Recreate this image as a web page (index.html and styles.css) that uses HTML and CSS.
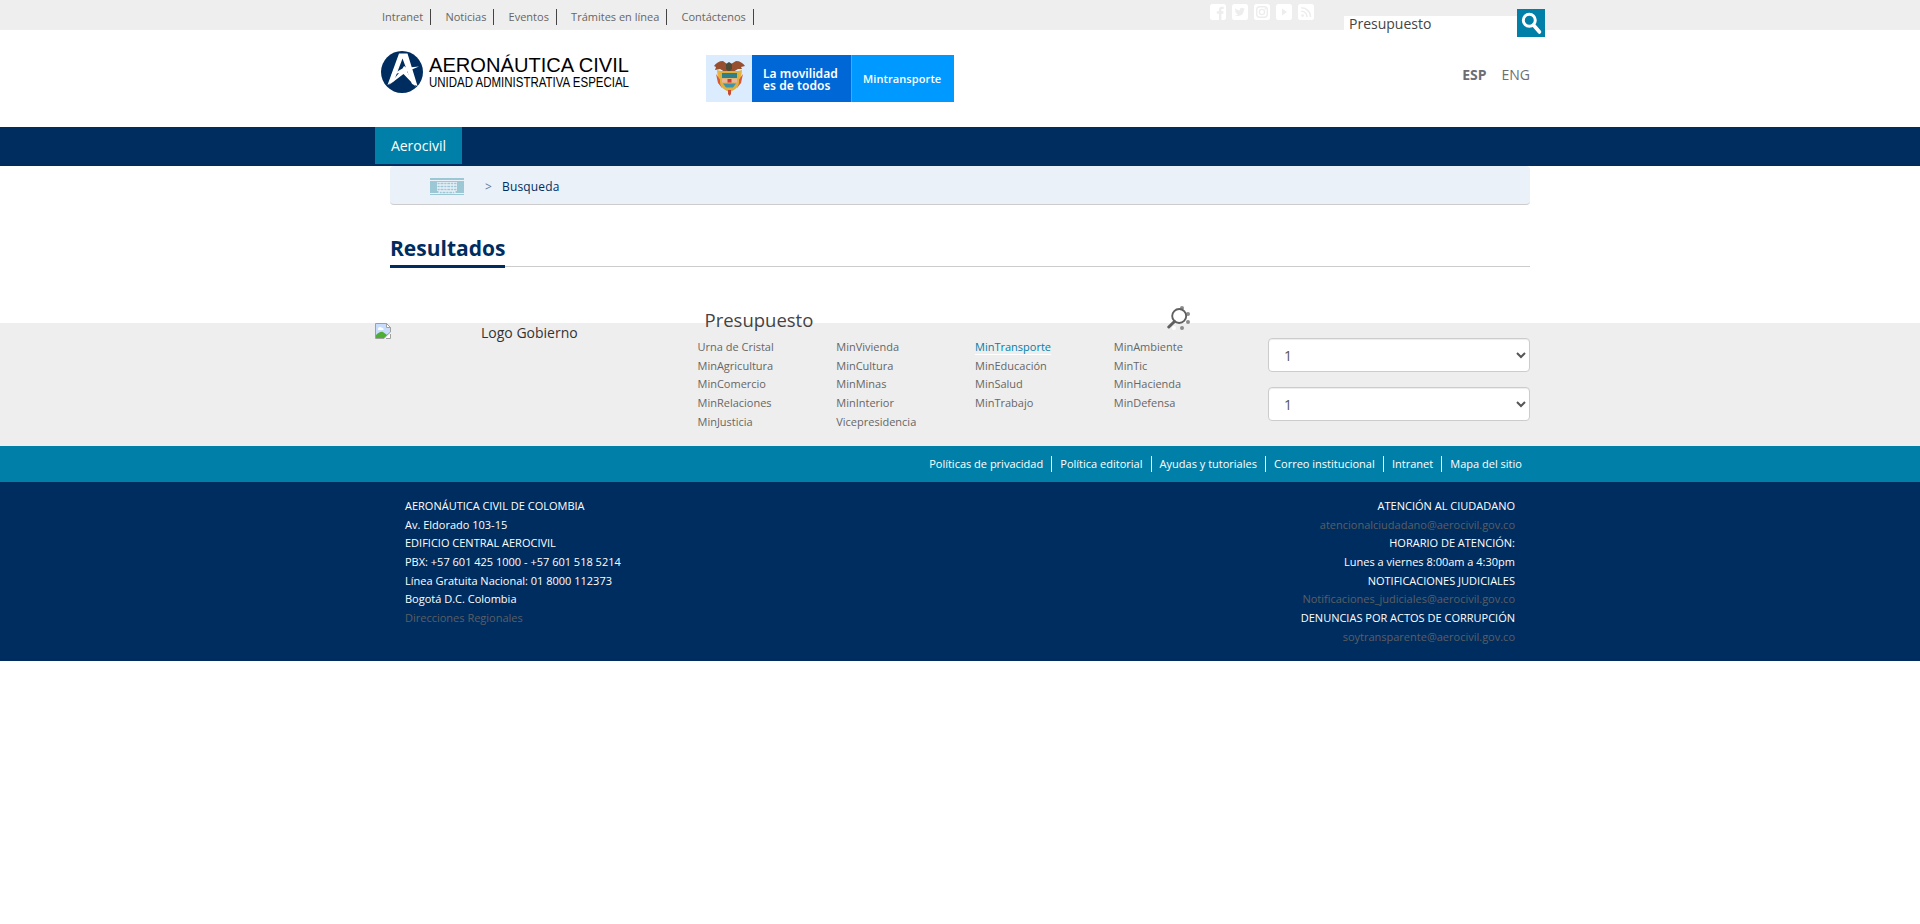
FILE: index.html
```html
<!DOCTYPE html>
<html lang="es">
<head>
<meta charset="utf-8">
<title>Aerocivil - Resultados</title>
<link rel="stylesheet" href="styles.css">
</head>
<body>
<div class="topbar">
  <div class="container topbar-inner">
    <ul class="toplinks">
      <li>Intranet</li><li>Noticias</li><li>Eventos</li><li>Trámites en línea</li><li>Contáctenos</li>
    </ul>
    <div class="social">
      <svg viewBox="0 0 16 16"><rect width="16" height="16" rx="2.5" fill="#fff"/><path d="M9 16V9.800H6.800V7.300H9V5.500C9 3.600 10 2.700 12 2.700h1.700V5h-1.300c-.8 0-1 .4-1 1v1.300h2.200l-.3 2.500h-1.900V16z" fill="#ededed"/></svg>
      <svg viewBox="0 0 16 16"><rect width="16" height="16" rx="2.500" fill="#fff"/><path d="M13 4.700l-1.200.4c.4-.3.700-.7.900-1.100l-1.300.5C9.800 3 7.500 4.200 7.800 6.400 5.900 6.300 4.500 5.500 3.400 4.200c-.6 1-.2 2.200.7 2.800l-1-.3c0 1.100.7 1.900 1.700 2.100h-.9c.3.800 1 1.300 2 1.400-.9.700-1.900 1-3 .9 4 2.400 9 .2 8.900-5z" fill="#ededed"/></svg>
      <svg viewBox="0 0 16 16"><rect width="16" height="16" rx="2.500" fill="#fff"/><g fill="none" stroke="#ededed" stroke-width="1.400"><rect x="2.700" y="2.700" width="10.600" height="10.600" rx="3"/><circle cx="8" cy="8" r="2.600"/></g><circle cx="11.300" cy="4.700" r=".8" fill="#ededed"/></svg>
      <svg viewBox="0 0 16 16"><rect width="16" height="16" rx="2.500" fill="#fff"/><path d="M6 4.500l5 3.500-5 3.500z" fill="#ededed"/></svg>
      <svg viewBox="0 0 16 16"><rect width="16" height="16" rx="2.500" fill="#fff"/><circle cx="4.600" cy="11.600" r="1.300" fill="#ededed"/><path d="M3.300 7.200c3.200 0 5.700 2.400 5.700 5.700M3.300 3.700c5 0 9.200 4 9.200 9.200" fill="none" stroke="#ededed" stroke-width="1.600"/></svg>
    </div>
    <div class="search">
      <div class="search-field">Presupuesto</div>
      <div class="search-btn"><svg viewBox="0 0 28 28"><circle cx="12.300" cy="11.300" r="6" fill="none" stroke="#fff" stroke-width="3"/><path d="M16.500 16l6 7" stroke="#fff" stroke-width="3.600" stroke-linecap="round"/></svg></div>
    </div>
  </div>
</div>

<header class="container header">
  <svg class="logo" viewBox="0 0 260 44">
    <circle cx="22" cy="22" r="21" fill="#002d5f"/>
    <path d="M19 3.500h8.500L37.500 36l-5.500-2L22.500 8.500 14 31l-6.500 4z" fill="#fff"/>
    <path d="M11 25l11.500-6.500L24 16l2.500 1.700L39 16.500l-12 5L36 37 23.500 24 9 35l10-12z" fill="#fff"/>
    <text x="49" y="22" class="logo-main" textLength="200" lengthAdjust="spacingAndGlyphs">AERONÁUTICA CIVIL</text>
    <text x="49" y="37" class="logo-sub" textLength="200" lengthAdjust="spacingAndGlyphs">UNIDAD ADMINISTRATIVA ESPECIAL</text>
  </svg>
  <div class="gov">
    <div class="gov-arms">
      <svg viewBox="0 0 46 47">
        <path d="M8 11c2-3 5-5 9-5l4 3h4l5-3c4 0 7 2 9 5l-4 1 1 2-4 0-5 3h-8l-5-3-5 1 1-3z" fill="#96502f"/>
        <path d="M20 9l3-2 3 2v5l-3 3-3-3z" fill="#4d4a35"/>
        <path d="M11 15l4 1 1 12-4-4zM36 15l-4 1-1 12 4-4z" fill="#e9b23c"/>
        <path d="M10 19l2 9 4 5-1-7zM37 19l-2 9-4 5 1-7z" fill="#d8583c"/>
        <path d="M14 16h19v11c0 5-4 8-9.500 10C18 35 14 32 14 27z" fill="#dcb13e"/>
        <path d="M16 18h15v5H16z" fill="#2f8088"/><path d="M16 23.500h15v4H16z" fill="#e7b5a5"/><path d="M21.500 24h4v3.500h-4z" fill="#d33838"/>
        <path d="M17 28.500h13l-3 4h-7z" fill="#3f93a8"/><path d="M22 35h3v4l-1.500 2-1.500-2z" fill="#c84b31"/>
      </svg>
    </div>
    <div class="gov-slogan">La movilidad<br>es de todos</div>
    <div class="gov-min">Mintransporte</div>
  </div>
  <div class="langs"><b>ESP</b><span>ENG</span></div>
</header>

<nav class="nav"><div class="container"><div class="tab">Aerocivil</div></div></nav>

<main class="container main">
  <div class="crumbs">
    <svg viewBox="0 0 34 17"><path d="M0 0h34v2H0zM0 3h34v12H0zM0 16h34v1H0z" fill="#9cc7d5"/><path d="M7 4h20v9h-2v3H9v-3H7z" fill="#eaf1f9"/><path d="M7.500 5.500h19M7.500 8.500h19M7.500 11.500h19M9.500 14.500h15" stroke="#9cc7d5" stroke-width="1.600" stroke-dasharray="2.200 .8 3 .8"/><path d="M9 13v3M25 13v3" stroke="#eaf1f9"/></svg>
    <span class="sep">&gt;</span><span>Busqueda</span>
  </div>
  <div class="title"><h1>Resultados</h1></div>
</main>

<section class="ministries">
  <div class="container min-grid">
    <div class="missing">
      <svg viewBox="0 0 16 16"><path d="M.5.5h11l4 4V9L12 12l-3 3.500H.5z" fill="#c8dcfb" stroke="#a0a0a0"/><path d="M11.500.5v4h4z" fill="#fff" stroke="#a0a0a0"/><path d="M1 15v-3c2-2 5-4 7-3l4 3-3 3z" fill="#4fad35"/><path d="M3 6c0-2 3-3 4-1 2 0 2 2 1 2H3z" fill="#fff"/><path d="M16 10v6h-6z" fill="#fff"/><path d="M15.500 11v4.500H11" fill="none" stroke="#a0a0a0"/></svg>
      <span>Logo Gobierno</span>
    </div>
    <div class="min-main">
      <div class="query"><span>Presupuesto</span>
        <svg viewBox="0 0 24 24"><g fill="#8c8c8c"><circle cx="15" cy="2" r="2"/><circle cx="21" cy="8" r="2"/><circle cx="21" cy="16" r="2"/><circle cx="15" cy="22" r="2"/></g><circle cx="7" cy="22" r="2" fill="#fff"/><circle cx="12.200" cy="10" r="7" fill="#fff" stroke="#606060" stroke-width="1.900"/><path d="M7.500 15.500L1.800 21" stroke="#606060" stroke-width="3" stroke-linecap="round"/></svg>
      </div>
      <div class="cols">
        <ul><li>Urna de Cristal</li><li>MinAgricultura</li><li>MinComercio</li><li>MinRelaciones</li><li>MinJusticia</li></ul>
        <ul><li>MinVivienda</li><li>MinCultura</li><li>MinMinas</li><li>MinInterior</li><li>Vicepresidencia</li></ul>
        <ul><li><span class="current">MinTransporte</span></li><li>MinEducación</li><li>MinSalud</li><li>MinTrabajo</li></ul>
        <ul><li>MinAmbiente</li><li>MinTic</li><li>MinHacienda</li><li>MinDefensa</li></ul>
      </div>
    </div>
    <div class="selects">
      <select><option>1</option></select>
      <select><option>1</option></select>
    </div>
  </div>
</section>

<div class="policies">
  <ul class="container"><li>Políticas de privacidad</li><li>Política editorial</li><li>Ayudas y tutoriales</li><li>Correo institucional</li><li>Intranet</li><li>Mapa del sitio</li></ul>
</div>

<footer class="footer">
  <div class="container footer-inner">
    <div>AERONÁUTICA CIVIL DE COLOMBIA<br>Av. Eldorado 103-15<br>EDIFICIO CENTRAL AEROCIVIL<br>PBX: +57 601 425 1000 - +57 601 518 5214<br>Línea Gratuita Nacional: 01 8000 112373<br>Bogotá D.C. Colombia<br><a>Direcciones Regionales</a></div>
    <div class="right">ATENCIÓN AL CIUDADANO<br><a>atencionalciudadano@aerocivil.gov.co</a><br>HORARIO DE ATENCIÓN:<br>Lunes a viernes 8:00am a 4:30pm<br>NOTIFICACIONES JUDICIALES<br><a>Notificaciones_judiciales@aerocivil.gov.co</a><br>DENUNCIAS POR ACTOS DE CORRUPCIÓN<br><a>soytransparente@aerocivil.gov.co</a></div>
  </div>
</footer>
</body>
</html>
```
FILE: styles.css
```css
* { box-sizing: border-box; }
body { margin: 0; font-family: "Open Sans", "Noto Sans", sans-serif; font-size: 14px; line-height: 20px; color: #444; background: #fff; }
ul { list-style: none; margin: 0; padding: 0; }
svg { display: block; flex: none; }
.container { width: 1170px; margin: 0 auto; }

.topbar { height: 30px; background: #eee; }
.topbar-inner { display: flex; align-items: flex-start; }
.toplinks { display: flex; gap: 14.200px; padding: 9px 0 0 7px; width: 835px; font-size: 11px; color: #666; }
.toplinks li { padding-right: 7px; border-right: 1px solid #444; height: 16px; line-height: 15px; }
.social { display: flex; gap: 6px; padding-top: 4px; width: 134px; }
.social svg { width: 16px; height: 16px; }
.search { display: flex; align-items: flex-start; }
.search-field { width: 173px; height: 17px; margin-top: 16px; padding-left: 5px; line-height: 15px; background: #fff; color: #444; }
.search-btn { width: 28px; height: 28px; margin-top: 9px; background: #007fa9; }

.header { height: 97px; display: flex; align-items: flex-start; }
.logo { width: 260px; height: 44px; margin: 20px 66px 0 5px; overflow: visible; }
.logo-main { font: 20.500px "Liberation Sans", Arial, sans-serif; fill: #000; }
.logo-sub { font: 14px "Liberation Sans", Arial, sans-serif; fill: #000; }
.gov { display: flex; width: 248px; height: 47px; margin-top: 25px; color: #fff; }
.gov-arms { width: 46px; background: #dbecff; }
.gov-slogan { width: 99px; padding: 13px 0 0 11px; background: #0067d6; font: 600 12px/12px "Noto Sans", sans-serif; letter-spacing: .05px; white-space: nowrap; }
.gov-min { flex: 1; padding-left: 11px; background: #09f; border-left: 1px solid #4aa5f5; font: 600 11px/47px "Open Sans", sans-serif; letter-spacing: .1px; }
.langs { display: flex; gap: 15px; margin: 35px 15px 0 auto; color: #6d6e72; }

.nav { height: 39px; background: #002d5f; }
.tab { width: 87px; height: 37px; background: #007fa9; color: #fff; text-align: center; line-height: 38px; font-weight: 500; }

.main { padding: 0 15px; height: 157px; }
.crumbs { display: flex; align-items: center; height: 39px; padding: 3px 0 0 40px; background: #eaf1f9; border-bottom: 1px solid #ccc; border-radius: 4px; font-size: 12px; font-weight: 500; letter-spacing: .15px; color: #002d5f; }
.crumbs svg { width: 34px; height: 17px; }
.sep { margin: 0 10px 0 21px; color: #5f7d9c; font-weight: 400; }
.title { display: flex; margin-top: 29px; background: linear-gradient(#ccc, #ccc) 0 32px / 100% 1px no-repeat; }
.title h1 { margin: 0; height: 34px; font-size: 21px; line-height: 28px; color: #002d5f; border-bottom: 3px solid #002d5f; }

.ministries { height: 123px; background: #eee; }
.min-grid { display: flex; }
.missing { display: flex; width: 322.500px; color: #333; }
.missing svg { width: 16px; height: 16px; margin-right: 90px; }
.min-main { width: 570.500px; margin-top: -19px; }
.query { display: flex; justify-content: space-between; align-items: flex-start; width: 493px; height: 34px; padding-left: 7px; font-size: 18.500px; line-height: 31px; }
.query svg { width: 24px; height: 24px; margin-top: 2px; }
.cols { display: grid; grid-template-columns: repeat(4, 138.750px); font-size: 11px; line-height: 18.700px; color: #666; }
.cols li { height: 18.700px; }
.current { color: #007fa9; border-bottom: 1px solid #fff; }
.selects { display: grid; gap: 15px; width: 262px; padding-top: 15px; align-content: start; }
select { width: 262px; height: 34px; padding: 6px 11px; border: 1px solid #ccc; border-radius: 4px; background: #fff; color: #555; font: 14px/20px "Open Sans", sans-serif; box-shadow: inset 0 1px 1px rgba(0,0,0,.075); }

.policies { height: 36px; background: #007fa9; padding-top: 10px; }
.policies ul { display: flex; justify-content: flex-end; padding-right: 15px; font-size: 11px; line-height: 16px; color: #fff; font-weight: 500; }
.policies li { height: 16px; padding: 0 8.100px; border-right: 1px solid #fff; }
.policies li:last-child { border: 0; }

.footer { height: 179px; background: #002d5f; color: #fff; }
.footer-inner { display: flex; justify-content: space-between; padding: 15px 30px 0; font-size: 11px; line-height: 18.650px; font-weight: 500; }
.footer a { color: #5c5f63; font-weight: 400; }
.right { text-align: right; }
```
